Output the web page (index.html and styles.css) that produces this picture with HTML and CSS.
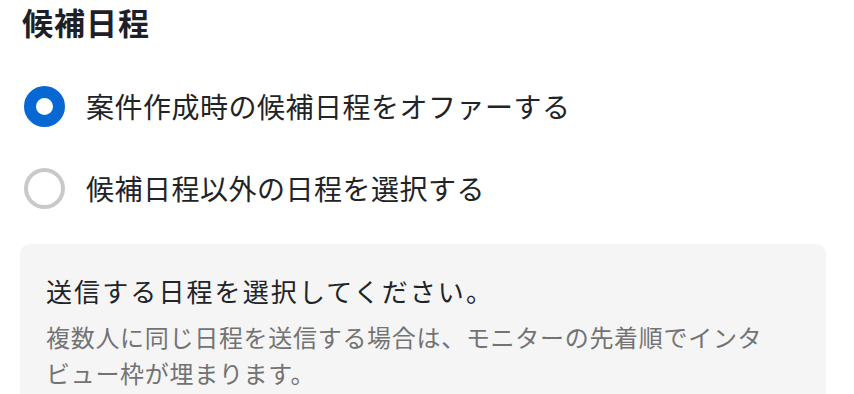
FILE: index.html
```html
<!DOCTYPE html>
<html lang="ja">
<head>
<meta charset="utf-8">
<title>候補日程</title>
<link rel="stylesheet" href="styles.css">
</head>
<body>
<div class="page">
  <h2 class="title">候補日程</h2>
  <div class="options">
    <label class="option">
      <span class="radio radio-checked"></span>
      <span class="option-text">案件作成時の候補日程をオファーする</span>
    </label>
    <label class="option">
      <span class="radio"></span>
      <span class="option-text">候補日程以外の日程を選択する</span>
    </label>
  </div>
  <div class="panel">
    <p class="panel-heading">送信する日程を選択してください。</p>
    <p class="panel-note">複数人に同じ日程を送信する場合は、モニターの先着順でインタビュー枠が埋まります。</p>
  </div>
</div>
</body>
</html>
```

FILE: styles.css
```css
html, body {
  margin: 0;
  padding: 0;
  background: #ffffff;
}

body {
  font-family: "Noto Sans CJK JP", "Noto Sans", sans-serif;
  color: #222326;
}

.page {
  padding: 0 28px 0 20px;
}

.title {
  margin: 0;
  padding-left: 2px;
  font-size: 31px;
  font-weight: 700;
  line-height: 44px;
  letter-spacing: 1px;
  color: #1d2127;
}

.options {
  display: flex;
  flex-direction: column;
  margin-top: 21px;
  padding-left: 4px;
}

.option {
  display: flex;
  align-items: center;
  gap: 21px;
  height: 82px;
}

.radio {
  flex: none;
  box-sizing: border-box;
  width: 41px;
  height: 41px;
  border-radius: 50%;
  border: 4px solid #c9c9c9;
  background: #ffffff;
}

.radio-checked {
  border: 12.5px solid #0868d3;
}

.option-text {
  font-size: 28px;
  line-height: 40px;
  letter-spacing: 0.5px;
  color: #222326;
}

.panel {
  margin-top: 15px;
  background: #f5f5f6;
  border-radius: 10px;
  padding: 29px 50px 20px 26px;
}

.panel-heading {
  margin: 0;
  font-size: 26px;
  line-height: 36px;
  letter-spacing: 2.1px;
  color: #222326;
}

.panel-note {
  margin: 10px 0 0 0;
  font-size: 24px;
  line-height: 36px;
  letter-spacing: 0.7px;
  color: #737373;
}
```
